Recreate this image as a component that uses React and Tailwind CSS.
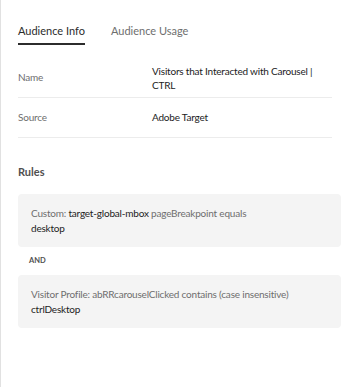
export default function App() {
  return (
    <div className="w-[357px] h-[387px] bg-white border-l border-[#e1e1e1] pl-[17px] font-['Lato',sans-serif] text-[10px] tracking-[-0.2px]">
      <div className="flex gap-[26px] pt-[23px] tracking-normal">
        <div className="text-[11px] leading-[16px] text-[#2c2c2c] pb-[4px] border-b-2 border-[#2c2c2c]">Audience Info</div>
        <div className="text-[11px] leading-[16px] text-[#6e6e6e] pb-[4px]">Audience Usage</div>
      </div>
      <div className="mt-[13px] mr-[25px]">
        <div className="flex items-center min-h-[40px] border-b border-[#ececec]">
          <div className="w-[134px] text-[#6e6e6e]">Name</div>
          <div className="flex-1 text-[#222222] leading-[14px]">
            Visitors that Interacted with Carousel |<br />CTRL
          </div>
        </div>
        <div className="flex items-center min-h-[40px] border-b border-[#ececec]">
          <div className="w-[134px] text-[#6e6e6e]">Source</div>
          <div className="flex-1 text-[#222222]">Adobe Target</div>
        </div>
      </div>
      <div className="mt-[26px] text-[11px] leading-[16px] font-bold tracking-normal text-[#505050]">Rules</div>
      <div className="mt-[14px] mr-[16px] bg-[#f4f4f4] rounded-[4px] pl-[13px] pr-[10px] pt-[12px] pb-[11px] leading-[15px] text-[#6e6e6e]">
        Custom: <span className="text-[#222222]">target-global-mbox</span> pageBreakpoint equals
        <br />
        <span className="text-[#222222]">desktop</span>
      </div>
      <div className="mt-[8px] pl-[11px] text-[7.5px] leading-[12px] font-bold tracking-normal text-[#505050]">AND</div>
      <div className="mt-[8px] mr-[16px] bg-[#f4f4f4] rounded-[4px] pl-[13px] pr-[10px] pt-[12px] pb-[11px] leading-[15px] text-[#6e6e6e]">
        Visitor Profile: abRRcarouselClicked contains (case insensitive)
        <br />
        <span className="text-[#222222]">ctrlDesktop</span>
      </div>
    </div>
  );
}
